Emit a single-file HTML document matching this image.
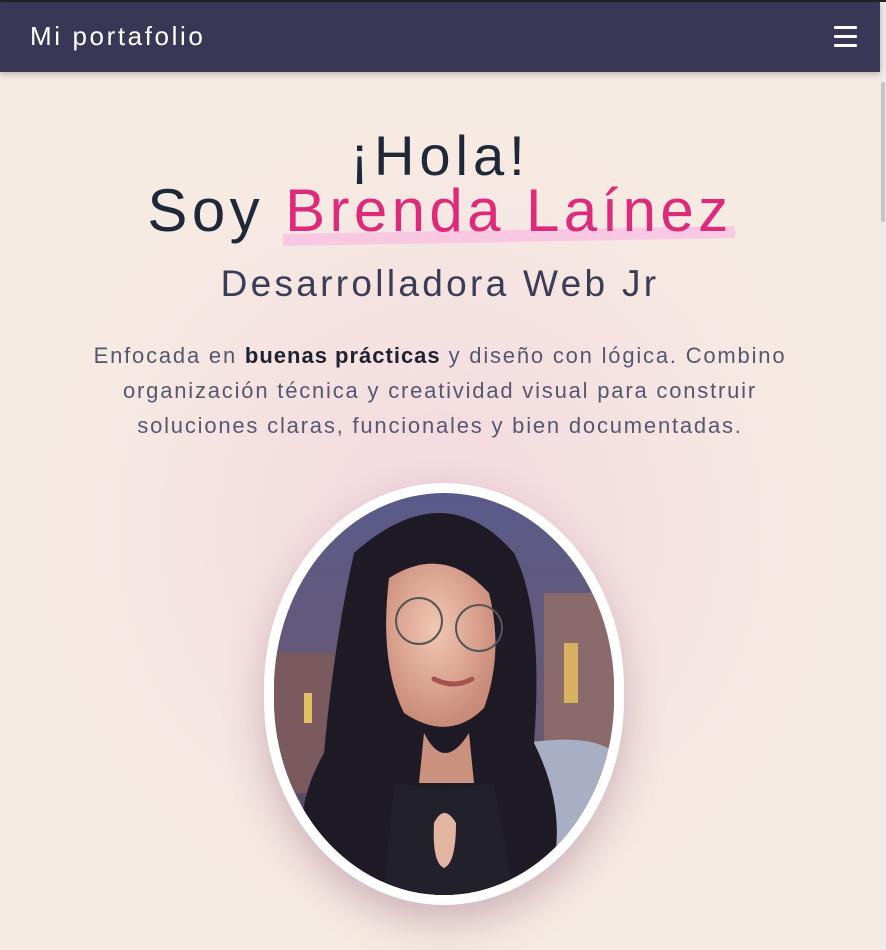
<!DOCTYPE html>
<html><head><meta charset="utf-8"><style>
*{margin:0;padding:0;box-sizing:border-box}
html,body{width:886px;height:950px;overflow:hidden}
body{font-family:"Liberation Sans",sans-serif;background:#f6ebe2;position:relative}
.top{position:absolute;left:0;top:0;width:886px;height:2px;background:#222}
nav{position:absolute;left:0;top:2px;width:880px;height:70px;background:#383856;box-shadow:0 2px 6px rgba(0,0,0,.25);z-index:2}
nav .t{position:absolute;left:30px;top:19px;color:#fff;font-size:26px;letter-spacing:2.6px}
nav .m{position:absolute;left:834px;top:24px;width:23px}
nav .m i{display:block;height:3px;background:#fff;margin-bottom:6px;border-radius:1px}
.sb{position:absolute;right:0;top:2px;width:6px;height:948px;background:#f0eaea}
.sb i{position:absolute;left:1px;top:80px;width:4px;height:140px;background:#c8c4c4;border-radius:2px}
.glow{position:absolute;left:40px;top:120px;width:800px;height:820px;border-radius:50%;background:radial-gradient(ellipse at center,rgba(240,200,220,.55),rgba(246,235,226,0) 70%)}
.c{position:absolute;left:0;width:880px;text-align:center;white-space:nowrap}
h1{font-weight:normal;color:#1f2838}
.h1{top:126px;font-size:56px;line-height:60px;letter-spacing:5px}
.h2{top:178px;font-size:60px;line-height:66px;letter-spacing:4.4px}
.pk{color:#dd2a7b;position:relative}
.pk:after{content:"";position:absolute;left:-2px;right:-2px;bottom:2px;height:12px;background:#f9c8e4;z-index:-1;transform:rotate(-1deg)}
.h3{top:263px;font-size:37px;color:#3a3d55;letter-spacing:3.3px}
.p{top:338px;font-size:22px;line-height:35px;color:#555770;letter-spacing:1.8px}
.p b{color:#1f2030;font-weight:bold;letter-spacing:1px}
.por{position:absolute;left:264px;top:483px;width:360px;height:422px;border-radius:180px/205px;background:#fff;padding:10px;box-shadow:0 18px 40px rgba(120,60,100,.3)}
.por .in{width:100%;height:100%;border-radius:170px/196px;overflow:hidden}
</style></head><body>
<div class="top"></div>
<div class="glow"></div>
<nav><div class="t">Mi portafolio</div><div class="m"><i></i><i></i><i></i></div></nav>
<div class="sb"><i></i></div>
<h1 class="c h1">¡Hola!</h1>
<h1 class="c h2">Soy <span class="pk">Brenda Laínez</span></h1>
<div class="c h3">Desarrolladora Web Jr</div>
<div class="c p">Enfocada en <b>buenas prácticas</b> y diseño con lógica. Combino<br>organización técnica y creatividad visual para construir<br>soluciones claras, funcionales y bien documentadas.</div>
<div class="por"><div class="in">
<svg width="340" height="402" viewBox="0 0 340 402">
<defs><linearGradient id="bg" x1="0" y1="0" x2="0" y2="1"><stop offset="0" stop-color="#5a5a8a"/><stop offset=".6" stop-color="#6a5870"/><stop offset="1" stop-color="#3a3a55"/></linearGradient>
<radialGradient id="sk" cx=".45" cy=".4" r=".6"><stop offset="0" stop-color="#f2c7b2"/><stop offset="1" stop-color="#c98a78"/></radialGradient></defs>
<rect width="340" height="402" fill="url(#bg)"/>
<rect x="0" y="160" width="60" height="140" fill="#7a5a5e"/>
<rect x="270" y="100" width="70" height="200" fill="#8a6a6a"/>
<rect x="290" y="150" width="14" height="60" fill="#d7b060"/>
<rect x="30" y="200" width="8" height="30" fill="#e0c060"/>
<path d="M250 250 Q320 240 340 260 L340 402 L260 402Z" fill="#a8aec4"/>
<path d="M0 330 Q40 300 60 330 L60 402 L0 402Z" fill="#9ea4bc"/>
<path d="M80 60 Q170 -20 240 60 Q270 120 260 250 Q300 330 270 402 L40 402 Q10 330 50 260 Q60 150 80 60Z" fill="#1e1b26"/>
<path d="M115 85 Q170 50 215 100 Q230 160 210 215 Q175 250 130 220 Q105 170 115 85Z" fill="url(#sk)"/>
<path d="M150 240 Q170 280 195 240 L200 290 L145 290Z" fill="#c9917e"/>
<path d="M120 290 Q170 300 220 290 L240 402 L110 402Z" fill="#22202a"/>
<path d="M160 330 Q170 310 182 330 Q182 370 170 375 Q158 370 160 330Z" fill="#e2b5a2"/>
<circle cx="145" cy="128" r="23" fill="none" stroke="#555" stroke-width="2"/>
<circle cx="205" cy="135" r="23" fill="none" stroke="#555" stroke-width="2"/>
<path d="M160 186 Q180 196 198 186" stroke="#a5524e" stroke-width="5" fill="none" stroke-linecap="round"/>
</svg></div></div>
</body></html>
